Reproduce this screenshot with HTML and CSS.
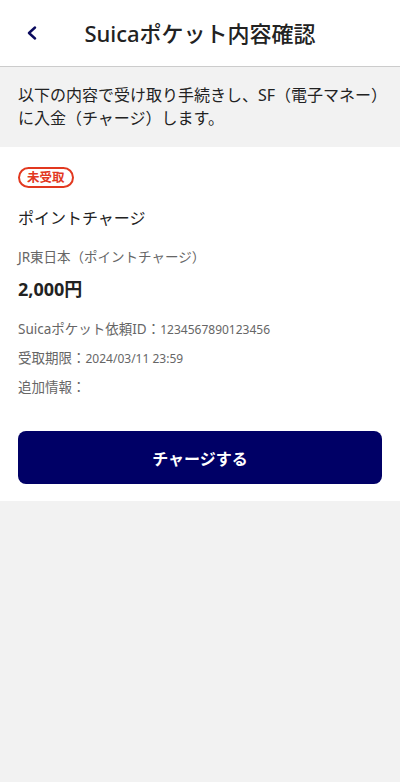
FILE: index.html
```html
<!DOCTYPE html>
<html lang="ja">
<head>
    <meta charset="UTF-8">
    <meta name="viewport" content="width=device-width, initial-scale=1.0">
    <title>Suicaポケット内容確認</title>
    <link rel="stylesheet" href="styles.css">
</head>
<body>
    <!-- Header -->
    <header class="header">
        <button class="back-button" aria-label="戻る">
            <svg width="12" height="14" viewBox="0 0 12 14">
                <path d="M9 1.5 L3 7 L9 12.5" fill="none" stroke="#0a0a5e" stroke-width="2.4" stroke-linecap="round" stroke-linejoin="round"/>
            </svg>
        </button>
        <h1 class="header-title">Suicaポケット内容確認</h1>
        <span></span>
    </header>

    <!-- Notice -->
    <section class="notice">
        <p>以下の内容で受け取り手続きし、SF（電子マネー）に入金（チャージ）します。</p>
    </section>

    <!-- Pocket Detail -->
    <section class="pocket-card">
        <span class="status-badge">未受取</span>
        <p class="pocket-name">ポイントチャージ</p>
        <p class="pocket-sender">JR東日本（ポイントチャージ）</p>
        <p class="pocket-amount">2,000円</p>
        <ul class="info-list">
            <li>Suicaポケット依頼ID：<span class="info-value">1234567890123456</span></li>
            <li>受取期限：<span class="info-value">2024/03/11 23:59</span></li>
            <li>追加情報：</li>
        </ul>
        <button class="button charge-button">チャージする</button>
    </section>
</body>
</html>
```

FILE: styles.css
```css
/* Color Palette */
:root {
    --page-bg-color: #f2f2f2;
    --card-bg-color: #ffffff;
    --main-text-color: #222222;
    --sub-text-color: #666666;
    --border-color: #cccccc;
    --navy-color: #000066;
    --alert-color: #e2381f;
}

/* General Body Style */
body {
    font-family: "Noto Sans", "Noto Sans CJK JP", sans-serif;
    background-color: var(--page-bg-color);
    color: var(--main-text-color);
    margin: 0;
    padding: 0;
}

p, h1, ul {
    margin: 0;
    padding: 0;
}

/* Header */
.header {
    display: grid;
    grid-template-columns: 60px 1fr 60px;
    align-items: center;
    height: 66px;
    background-color: var(--card-bg-color);
    border-bottom: 1px solid var(--border-color);
}

.back-button {
    display: flex;
    align-items: center;
    padding: 0 0 0 26px;
    height: 40px;
    background: none;
    border: none;
    cursor: pointer;
}

.header-title {
    font-size: 22px;
    font-weight: 500;
    text-align: center;
    line-height: 30px;
    color: var(--main-text-color);
}

/* Notice */
.notice {
    padding: 17px 18px 17px;
    font-size: 16px;
    line-height: 23px;
}

/* Pocket Card */
.pocket-card {
    background-color: var(--card-bg-color);
    padding: 20px 18px 17px;
    display: flex;
    flex-direction: column;
    align-items: flex-start;
}

.status-badge {
    display: inline-block;
    box-sizing: border-box;
    height: 21px;
    padding: 0 7px;
    border: 2px solid var(--alert-color);
    border-radius: 11px;
    color: var(--alert-color);
    font-size: 12.5px;
    font-weight: 700;
    line-height: 17px;
}

.pocket-name {
    margin-top: 18px;
    font-size: 16px;
    line-height: 24px;
}

.pocket-sender {
    margin-top: 17px;
    font-size: 13.5px;
    line-height: 20px;
    color: var(--sub-text-color);
}

.pocket-amount {
    margin-top: 9px;
    font-size: 18px;
    font-weight: 700;
    line-height: 26px;
}

.info-list {
    list-style: none;
    margin-top: 17px;
    display: flex;
    flex-direction: column;
    gap: 8px;
    font-size: 13.5px;
    line-height: 20px;
    color: var(--sub-text-color);
}

.info-value {
    font-size: 12px;
}

/* Buttons */
.button {
    font-family: inherit;
    border: none;
    cursor: pointer;
}

.charge-button {
    align-self: stretch;
    margin-top: 34px;
    height: 53px;
    border-radius: 8px;
    background-color: var(--navy-color);
    color: #ffffff;
    font-size: 16px;
    font-weight: 700;
}
```
